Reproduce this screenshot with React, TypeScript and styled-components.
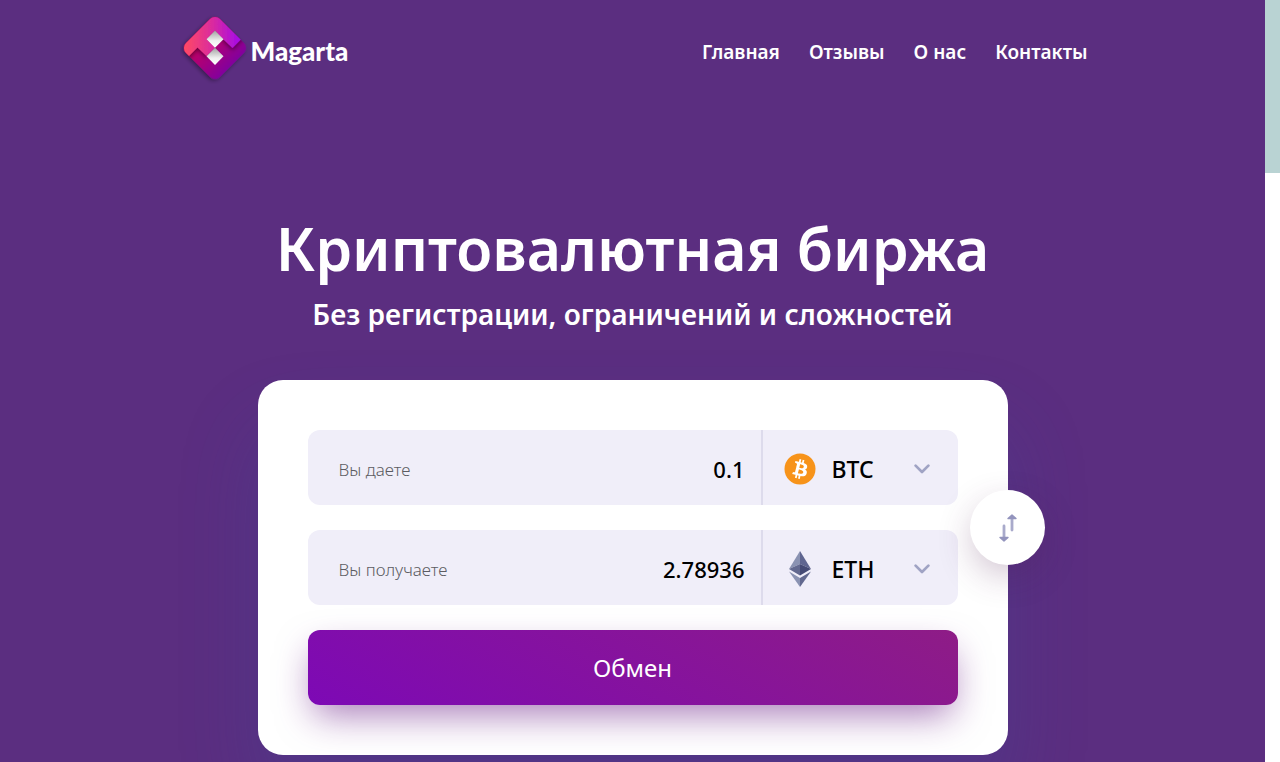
import React, { useState } from "react";
import styled, { createGlobalStyle } from "styled-components";

const GlobalStyle = createGlobalStyle`
  *, *::before, *::after { box-sizing: border-box; }
  html, body, #root { height: 100%; margin: 0; }
  body {
    overflow: hidden;
    background: #5b2e80;
    color: #fff;
    font-family: "Noto Sans", "Open Sans", sans-serif;
  }
`;

const Frame = styled.div`
  display: flex;
  height: 100vh;
`;

const Page = styled.div`
  flex: 1;
  min-width: 0;
  overflow: hidden;
  background: #5b2e80;
`;

const ScrollTrack = styled.div`
  width: 15px;
  background: #fff;
`;

const ScrollThumb = styled.div`
  height: 173px;
  background: #b9d3d3;
`;

const Header = styled.header`
  display: flex;
  align-items: center;
  justify-content: space-between;
  width: 100%;
  max-width: 910px;
  height: 96px;
  margin: 0 auto;
`;

const Brand = styled.a`
  display: flex;
  align-items: center;
  gap: 1px;
  padding-left: 2px;
  color: #fff;
  font-family: Lato, sans-serif;
  font-size: 26px;
  font-weight: 900;
  line-height: 36px;
  text-decoration: none;
`;

const BrandName = styled.span`
  padding-top: 6px;
`;

const Nav = styled.nav`
  display: flex;
  gap: 29px;
  padding-top: 7px;
`;

const NavLink = styled.a`
  color: #fff;
  font-size: 19px;
  font-weight: 600;
  line-height: 24px;
  text-decoration: none;
`;

const Main = styled.main`
  display: flex;
  flex-direction: column;
  align-items: center;
  padding: 112px 16px 0;
`;

const Title = styled.h1`
  margin: 0;
  font-size: 59px;
  font-weight: 600;
  line-height: 80px;
  text-align: center;
`;

const Subtitle = styled.p`
  margin: 6px 0 0;
  font-size: 28px;
  font-weight: 600;
  line-height: 40px;
  text-align: center;
`;

const Card = styled.form`
  position: relative;
  display: flex;
  flex-direction: column;
  gap: 25px;
  width: 100%;
  max-width: 750px;
  margin-top: 46px;
  padding: 50px;
  border-radius: 25px;
  background: #fff;
  box-shadow: 0 50px 80px rgba(50, 80, 160, 0.24);
`;

const Row = styled.div`
  display: flex;
  height: 75px;
  border-radius: 12px;
  background: #f0eef9;
`;

const Field = styled.label`
  display: flex;
  flex: 1;
  align-items: center;
  min-width: 0;
  padding: 4px 16px 0 31px;
  color: #5c5c62;
  font-size: 17px;
  font-weight: 300;
  white-space: nowrap;
`;

const Amount = styled.input`
  flex: 1;
  min-width: 0;
  padding: 0 0 2px;
  border: 0;
  outline: 0;
  background: transparent;
  color: #000;
  font-family: inherit;
  font-size: 22px;
  font-weight: 500;
  text-align: right;
`;

const Picker = styled.label`
  display: grid;
  grid-template-columns: 32px 1fr 16px;
  align-items: center;
  column-gap: 16px;
  width: 197px;
  padding: 2px 28px 0 21px;
  border-left: 2px solid #dddbec;
`;

const CurrencySelect = styled.select`
  appearance: none;
  width: 100%;
  height: 40px;
  padding: 1px 0 0;
  border: 0;
  outline: 0;
  background: transparent;
  color: #000;
  font-family: inherit;
  font-size: 23px;
  font-weight: 500;
`;

const Submit = styled.button`
  height: 75px;
  border: 0;
  border-radius: 12px;
  background: linear-gradient(30deg, #7d09b5, #8e1c86);
  box-shadow: 0 16px 36px -6px rgba(100, 20, 130, 0.55);
  color: #fff;
  font-family: inherit;
  font-size: 24px;
  font-weight: 400;
  cursor: pointer;
`;

const SwapButton = styled.button`
  position: absolute;
  top: 110px;
  right: -37px;
  display: flex;
  align-items: center;
  justify-content: center;
  width: 75px;
  height: 75px;
  padding: 0;
  border: 0;
  border-radius: 50%;
  background: #fff;
  box-shadow: 0 12px 36px -4px rgba(80, 30, 80, 0.3);
  cursor: pointer;
`;

const LogoMark = () => (
  <svg width="70" height="72" viewBox="0 0 70 72" aria-hidden="true">
    <defs>
      <linearGradient id="logoTop" gradientUnits="userSpaceOnUse" x1="4" y1="0" x2="62" y2="0">
        <stop offset="0" stopColor="#ff4a63" />
        <stop offset="0.5" stopColor="#d92aa0" />
        <stop offset="1" stopColor="#a008ee" />
      </linearGradient>
      <linearGradient id="logoBottom" gradientUnits="userSpaceOnUse" x1="8" y1="0" x2="66" y2="0">
        <stop offset="0" stopColor="#cf0050" />
        <stop offset="0.5" stopColor="#a8007c" />
        <stop offset="1" stopColor="#7600a8" />
      </linearGradient>
      <linearGradient id="logoSquare" x1="0" y1="0" x2="0" y2="1">
        <stop offset="0" stopColor="#a0a0a0" />
        <stop offset="0.6" stopColor="#f0f0f0" />
        <stop offset="1" stopColor="#fff" />
      </linearGradient>
      <filter id="logoShadow" x="-20%" y="-20%" width="150%" height="150%">
        <feDropShadow dx="0" dy="2" stdDeviation="2" floodOpacity="0.4" />
      </filter>
      <filter id="foldShadow" x="-20%" y="-20%" width="150%" height="150%">
        <feDropShadow dx="0" dy="2" stdDeviation="2" floodOpacity="0.45" />
      </filter>
      <clipPath id="logoClip">
        <rect x="11" y="12" width="48" height="48" rx="7" transform="rotate(45 35 36)" />
      </clipPath>
    </defs>
    <rect x="11" y="12" width="48" height="48" rx="7" transform="rotate(45 35 36)" fill="url(#logoBottom)" filter="url(#logoShadow)" />
    <g clipPath="url(#logoClip)">
      <path d="M0 53 L17.500 35.500 L26.500 44 L35 35.500 L26.500 27.500 L35 18.500 L43.500 27.500 L52.500 36 L72 16 V-5 H-2 V53Z" fill="url(#logoTop)" filter="url(#foldShadow)" />
    </g>
    <path d="M35 18.500 L43.500 27.200 L35 35.700 L26.500 27.200Z" fill="url(#logoSquare)" />
    <path d="M35 35.700 L43.500 44.200 L35 53 L26.500 44.200Z" fill="url(#logoSquare)" />
  </svg>
);

const BitcoinIcon = () => (
  <svg width="32" height="32" viewBox="0 0 32 32" aria-hidden="true">
    <circle cx="16" cy="16" r="15.500" fill="#f7931a" />
    <path
      fill="#fff"
      d="M23.189 14.020c.314-2.096-1.283-3.223-3.465-3.975l.708-2.840-1.728-.43-.69 2.765c-.454-.114-.92-.22-1.385-.326l.695-2.783L15.596 6l-.708 2.839c-.376-.086-.746-.17-1.104-.26l.002-.009-2.384-.595-.46 1.846s1.283.294 1.256.312c.7.175.826.638.805 1.006l-.806 3.235c.048.012.11.030.180.057l-.183-.045-1.130 4.532c-.086.212-.303.531-.793.410.018.025-1.256-.313-1.256-.313l-.858 1.978 2.250.561c.418.105.828.215 1.231.318l-.715 2.872 1.727.43.708-2.840c.472.127.930.245 1.378.357l-.706 2.828 1.728.43.715-2.866c2.948.558 5.164.333 6.097-2.333.752-2.146-.037-3.385-1.588-4.192 1.130-.260 1.980-1.003 2.207-2.538zm-3.950 5.538c-.533 2.147-4.148.986-5.320.695l.950-3.805c1.172.293 4.929.872 4.370 3.110zm.535-5.569c-.487 1.953-3.495.960-4.470.717l.860-3.450c.975.243 4.118.696 3.610 2.733z"
    />
  </svg>
);

const EthereumIcon = () => (
  <svg width="32" height="36" viewBox="0 0 32 36" aria-hidden="true">
    <path d="M16 0 L27 18 L16 13Z" fill="#5f6590" />
    <path d="M16 0 L5 18 L16 13Z" fill="#8a92b2" />
    <path d="M16 13 L5 18 L16 24.500Z" fill="#62688f" />
    <path d="M16 13 L27 18 L16 24.500Z" fill="#454a75" />
    <path d="M5 20.500 L16 27 V36Z" fill="#8a92b2" />
    <path d="M27 20.500 L16 27 V36Z" fill="#62688f" />
  </svg>
);

const ChevronIcon = () => (
  <svg width="16" height="10" viewBox="0 0 16 10" fill="none" stroke="#a0a3c4" strokeWidth="2.700" strokeLinecap="round" strokeLinejoin="round" aria-hidden="true">
    <path d="M1.600 1.600 L8 8 L14.400 1.600" />
  </svg>
);

const SwapIcon = () => (
  <svg width="20" height="28" viewBox="0 0 20 28" aria-hidden="true">
    <path d="M7 12 V24 M15 16 V4" stroke="#a9aacb" strokeWidth="2.800" strokeLinecap="round" />
    <path d="M3 23.500 H11 L7 27Z M11 4.500 H19 L15 1Z" fill="#9394bd" stroke="#9394bd" strokeWidth="1.400" strokeLinejoin="round" />
  </svg>
);

type Currency = "BTC" | "ETH";

const icons: Record<Currency, () => React.JSX.Element> = {
  BTC: BitcoinIcon,
  ETH: EthereumIcon,
};

interface ExchangeRowProps {
  label: string;
  amount: string;
  currency: Currency;
  onAmount: (value: string) => void;
  onCurrency: (value: Currency) => void;
}

const ExchangeRow = ({ label, amount, currency, onAmount, onCurrency }: ExchangeRowProps) => {
  const Icon = icons[currency];
  return (
    <Row>
      <Field>
        {label}
        <Amount value={amount} inputMode="decimal" onChange={(e) => onAmount(e.target.value)} />
      </Field>
      <Picker>
        <Icon />
        <CurrencySelect aria-label={label} value={currency} onChange={(e) => onCurrency(e.target.value as Currency)}>
          <option>BTC</option>
          <option>ETH</option>
        </CurrencySelect>
        <ChevronIcon />
      </Picker>
    </Row>
  );
};

const links = ["Главная", "Отзывы", "О нас", "Контакты"];

export default function App() {
  const [give, setGive] = useState<{ amount: string; currency: Currency }>({ amount: "0.1", currency: "BTC" });
  const [take, setTake] = useState<{ amount: string; currency: Currency }>({ amount: "2.78936", currency: "ETH" });

  const swap = () => {
    setGive(take);
    setTake(give);
  };

  return (
    <>
      <GlobalStyle />
      <Frame>
        <Page>
          <Header>
            <Brand href="#">
              <LogoMark />
              <BrandName>Magarta</BrandName>
            </Brand>
            <Nav>
              {links.map((link) => (
                <NavLink key={link} href="#">
                  {link}
                </NavLink>
              ))}
            </Nav>
          </Header>
          <Main>
            <Title>Криптовалютная биржа</Title>
            <Subtitle>Без регистрации, ограничений и сложностей</Subtitle>
            <Card onSubmit={(e) => e.preventDefault()}>
              <ExchangeRow
                label="Вы даете"
                amount={give.amount}
                currency={give.currency}
                onAmount={(amount) => setGive({ ...give, amount })}
                onCurrency={(currency) => setGive({ ...give, currency })}
              />
              <ExchangeRow
                label="Вы получаете"
                amount={take.amount}
                currency={take.currency}
                onAmount={(amount) => setTake({ ...take, amount })}
                onCurrency={(currency) => setTake({ ...take, currency })}
              />
              <Submit type="submit">Обмен</Submit>
              <SwapButton type="button" aria-label="Поменять местами" onClick={swap}>
                <SwapIcon />
              </SwapButton>
            </Card>
          </Main>
        </Page>
        <ScrollTrack>
          <ScrollThumb />
        </ScrollTrack>
      </Frame>
    </>
  );
}
